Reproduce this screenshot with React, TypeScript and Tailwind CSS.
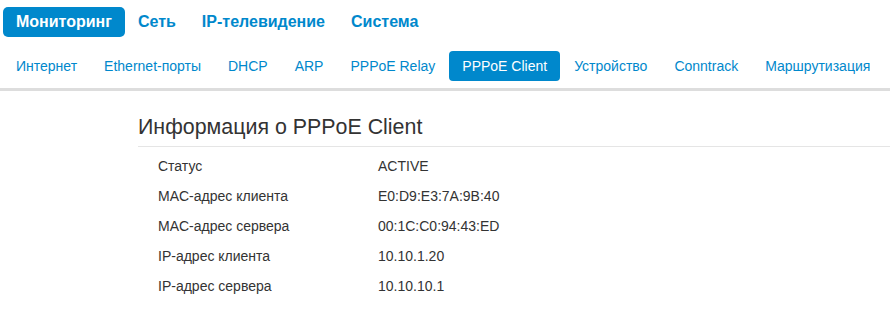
import React from "react";

const top = ["Мониторинг", "Сеть", "IP-телевидение", "Система"];
const sub = ["Интернет", "Ethernet-порты", "DHCP", "ARP", "PPPoE Relay", "PPPoE Client", "Устройство", "Conntrack", "Маршрутизация"];
const rows: [string, string][] = [
  ["Статус", "ACTIVE"],
  ["MAC-адрес клиента", "E0:D9:E3:7A:9B:40"],
  ["MAC-адрес сервера", "00:1C:C0:94:43:ED"],
  ["IP-адрес клиента", "10.10.1.20"],
  ["IP-адрес сервера", "10.10.10.1"],
];

export default function App() {
  return (
    <div className="w-[890px] h-[327px] bg-white text-[#333] overflow-hidden" style={{ fontFamily: '"Liberation Sans", Arial, sans-serif' }}>
      <div className="flex pl-[3px] pt-[7px]">
        {top.map((t, i) => (
          <div key={t} className={`h-[30px] px-[13px] flex items-center rounded-[5px] text-[16px] font-bold ${i === 0 ? "bg-[#0088cc] text-white" : "text-[#0088cc]"}`}>{t}</div>
        ))}
      </div>
      <div className="flex gap-[1px] pl-[3px] mt-[14px]">
        {sub.map((t) => (
          <div key={t} className={`h-[30px] px-[13px] flex items-center rounded-[4px] text-[14px] ${t === "PPPoE Client" ? "bg-[#0088cc] text-white" : "text-[#0088cc]"}`}>{t}</div>
        ))}
      </div>
      <div className="mt-[7px] h-[3px] bg-[#dddddd]" />
      <div className="ml-[138px] mt-[25px]">
        <h2 className="text-[21.4px] leading-[22px] pb-[8px] border-b border-[#e5e5e5] text-[#333]">Информация о PPPoE Client</h2>
        <div className="pt-[4px] pl-[20px]">
          {rows.map(([k, v]) => (
            <div key={k} className="flex h-[30px] items-center text-[14px]">
              <div className="w-[220px]">{k}</div>
              <div>{v}</div>
            </div>
          ))}
        </div>
      </div>
    </div>
  );
}
